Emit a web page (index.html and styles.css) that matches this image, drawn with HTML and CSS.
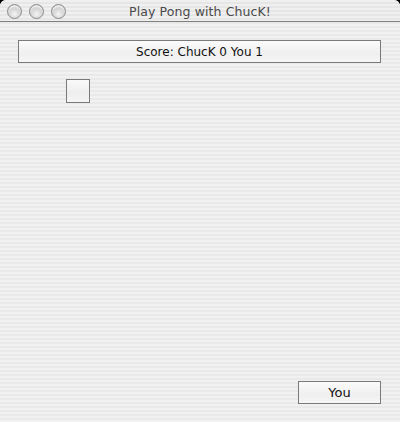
FILE: index.html
```html
<!DOCTYPE html>
<html>
<head>
<meta charset="utf-8">
<link rel="stylesheet" href="styles.css">
</head>
<body>
<div class="window">
  <div class="titlebar">
    <div class="lights">
      <span class="light"></span>
      <span class="light"></span>
      <span class="light"></span>
    </div>
    <div class="title">Play Pong with ChucK!</div>
  </div>
  <div class="content">
    <div class="score">Score: ChucK 0 You 1</div>
    <div class="ball"></div>
    <div class="spacer"></div>
    <div class="footer">
      <div class="btn">You</div>
    </div>
  </div>
</div>
</body>
</html>
```
FILE: styles.css
```css
html, body {
  margin: 0;
  padding: 0;
  background: #000;
}
.window {
  width: 400px;
  height: 422px;
  display: flex;
  flex-direction: column;
  border-radius: 6px 6px 0 0;
  overflow: hidden;
  background: repeating-linear-gradient(to bottom, #f1f1f1 0px, #f1f1f1 2px, #e9e9e9 2px, #e9e9e9 4px);
  font-family: "DejaVu Sans", "Liberation Sans", sans-serif;
}
.titlebar {
  position: relative;
  height: 21px;
  border-bottom: 1px solid #7e7e7e;
  display: flex;
  align-items: center;
  justify-content: center;
  background: repeating-linear-gradient(to bottom, #f0f0f0 0px, #f0f0f0 2px, #e6e6e6 2px, #e6e6e6 4px);
}
.lights {
  position: absolute;
  left: 7px;
  top: 4px;
  display: flex;
  gap: 7px;
}
.light {
  width: 13px;
  height: 13px;
  border-radius: 50%;
  border: 1px solid #8a8a8a;
  background: radial-gradient(circle at 50% 70%, #f4f4f4 0%, #d6d6d6 45%, #a9a9a9 100%);
  box-shadow: inset 0 2px 2px rgba(255,255,255,0.8);
}
.title {
  font-size: 12.5px;
  color: #4a4a4a;
  letter-spacing: 0.1px;
  padding-top: 1px;
}
.content {
  flex: 1;
  display: flex;
  flex-direction: column;
  padding: 18px 19px 18px 18px;
}
.score {
  height: 21px;
  border: 1px solid #7a7a7a;
  background: linear-gradient(to bottom, #fbfbfb 0%, #efefef 60%, #f6f6f6 100%);
  display: flex;
  align-items: center;
  justify-content: center;
  font-size: 12px;
  color: #111;
}
.ball {
  margin-top: 16px;
  margin-left: 48px;
  width: 22px;
  height: 22px;
  border: 1px solid #7a7a7a;
  background: linear-gradient(to bottom, #f9f9f9 0%, #eeeeee 60%, #f5f5f5 100%);
}
.spacer {
  flex: 1;
}
.footer {
  display: flex;
  justify-content: flex-end;
}
.btn {
  width: 81px;
  height: 21px;
  border: 1px solid #7a7a7a;
  background: linear-gradient(to bottom, #fbfbfb 0%, #efefef 60%, #f6f6f6 100%);
  display: flex;
  align-items: center;
  justify-content: center;
  font-size: 13px;
  color: #111;
}
```
